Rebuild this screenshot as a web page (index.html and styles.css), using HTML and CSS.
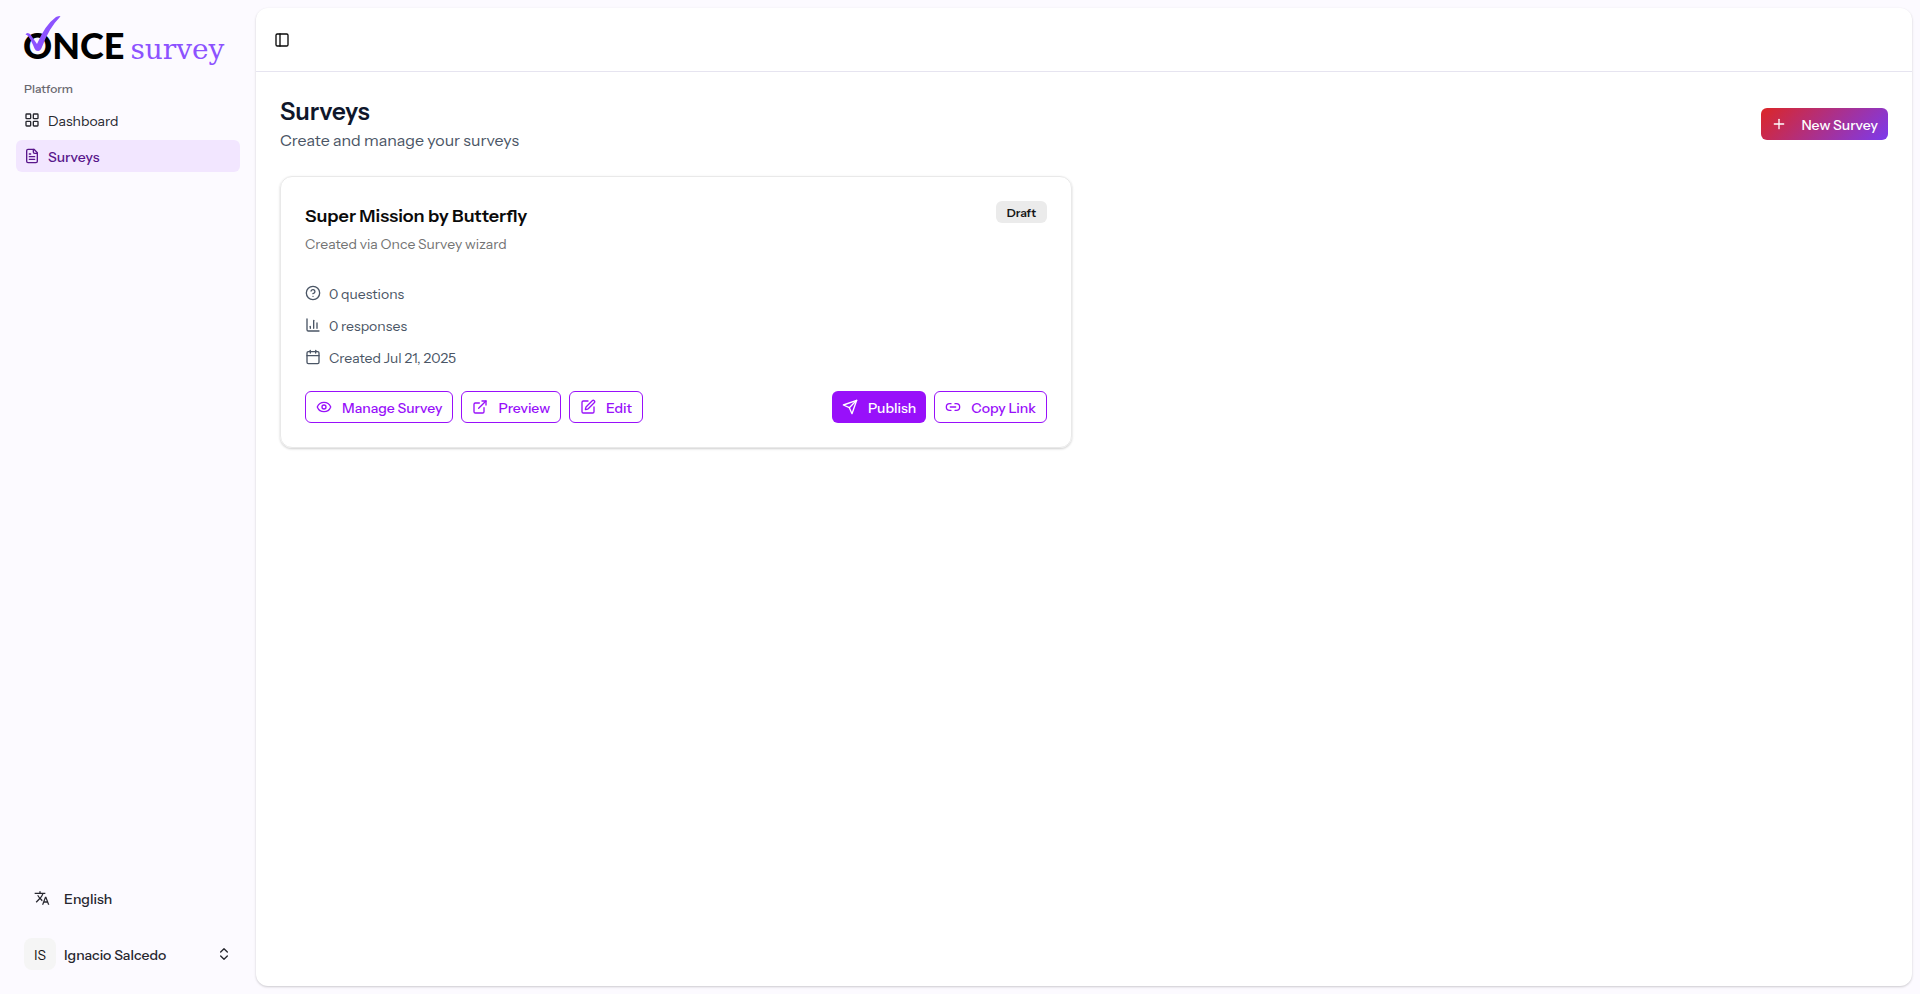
FILE: index.html
```html
<!DOCTYPE html>
<html lang="en">
<head>
    <meta charset="UTF-8">
    <meta name="viewport" content="width=device-width, initial-scale=1.0">
    <title>Surveys - Once Survey</title>
    <link rel="stylesheet" href="styles.css">
</head>
<body>
    <div class="layout">
        <aside class="sidebar">
            <a class="logo" href="#">
                <span class="logo-once">ONCE</span>
                <span class="logo-survey">survey</span>
                <svg class="logo-check" viewBox="0 0 36 36">
                    <path d="M.5 18.5 2 17Q5 17 6.500 20L12 28Q20 9 31 1 33 0 35.500 0L34.500 1.500Q24 12 17 31 15.500 35 13 35 10.500 35 9.500 32.500 6 24 3.500 20.500 2.500 19 .5 18.500Z"/>
                </svg>
            </a>

            <nav class="nav">
                <div class="nav-label">Platform</div>
                <a class="nav-item" href="#">
                    <svg class="icon" viewBox="0 0 24 24"><rect width="7" height="7" x="3" y="3" rx="1"/><rect width="7" height="7" x="14" y="3" rx="1"/><rect width="7" height="7" x="14" y="14" rx="1"/><rect width="7" height="7" x="3" y="14" rx="1"/></svg>
                    <span class="label">Dashboard</span>
                </a>
                <a class="nav-item active" href="#">
                    <svg class="icon" viewBox="0 0 24 24"><path d="M15 2H6a2 2 0 0 0-2 2v16a2 2 0 0 0 2 2h12a2 2 0 0 0 2-2V7Z"/><path d="M14 2v4a2 2 0 0 0 2 2h4"/><path d="M10 9H8"/><path d="M16 13H8"/><path d="M16 17H8"/></svg>
                    <span class="label">Surveys</span>
                </a>
            </nav>

            <div class="sidebar-footer">
                <button class="language" type="button">
                    <svg class="icon" viewBox="0 0 24 24"><path class="solid" d="m12.87 15.07-2.54-2.51.03-.03A17.52 17.52 0 0 0 14.07 6H17V4h-7V2H8v2H1v2h11.17C11.5 7.92 10.44 9.75 9 11.35 8.07 10.32 7.3 9.19 6.69 8h-2c.73 1.63 1.73 3.17 2.98 4.56l-5.09 5.02L4 19l5-5 3.11 3.11.76-2.04zM18.5 10h-2L12 22h2l1.12-3h4.75L21 22h2l-4.5-12zm-2.62 7 1.62-4.33L19.12 17h-3.24z"/></svg>
                    <span class="label">English</span>
                </button>
                <button class="user" type="button">
                    <span class="avatar">IS</span>
                    <span class="label user-name">Ignacio Salcedo</span>
                    <svg class="icon" viewBox="0 0 24 24"><path d="m7 15 5 5 5-5"/><path d="m7 9 5-5 5 5"/></svg>
                </button>
            </div>
        </aside>

        <main class="main">
            <header class="topbar">
                <button class="sidebar-toggle" type="button" aria-label="Toggle Sidebar">
                    <svg class="icon" viewBox="0 0 24 24"><rect width="18" height="18" x="3" y="3" rx="2"/><path d="M9 3v18"/></svg>
                </button>
            </header>

            <div class="content">
                <div class="page-header">
                    <div>
                        <h1>Surveys</h1>
                        <p>Create and manage your surveys</p>
                    </div>
                    <button class="button gradient" type="button">
                        <svg class="icon" viewBox="0 0 24 24"><path d="M5 12h14"/><path d="M12 5v14"/></svg>
                        <span class="label">New Survey</span>
                    </button>
                </div>

                <div class="survey-grid">
                    <article class="card">
                        <div class="card-header">
                            <div class="card-title">
                                <h2>Super Mission by Butterfly</h2>
                                <p>Created via Once Survey wizard</p>
                            </div>
                            <span class="badge">Draft</span>
                        </div>

                        <ul class="stats">
                            <li>
                                <svg class="icon" viewBox="0 0 24 24"><circle cx="12" cy="12" r="10"/><path d="M9.09 9a3 3 0 0 1 5.83 1c0 2-3 3-3 3"/><path d="M12 17h.01"/></svg>
                                <span class="label">0 questions</span>
                            </li>
                            <li>
                                <svg class="icon" viewBox="0 0 24 24"><path d="M3 3v16a2 2 0 0 0 2 2h16"/><path d="M18 17V9"/><path d="M13 17V5"/><path d="M8 17v-3"/></svg>
                                <span class="label">0 responses</span>
                            </li>
                            <li>
                                <svg class="icon" viewBox="0 0 24 24"><path d="M8 2v4"/><path d="M16 2v4"/><rect width="18" height="18" x="3" y="4" rx="2"/><path d="M3 10h18"/></svg>
                                <span class="label">Created Jul 21, 2025</span>
                            </li>
                        </ul>

                        <div class="actions">
                            <div class="action-group">
                                <button class="button outline" type="button">
                                    <svg class="icon" viewBox="0 0 24 24"><path d="M2.062 12.348a1 1 0 0 1 0-.696 10.75 10.75 0 0 1 19.876 0 1 1 0 0 1 0 .696 10.75 10.75 0 0 1-19.876 0"/><circle cx="12" cy="12" r="3"/></svg>
                                    <span class="label">Manage Survey</span>
                                </button>
                                <button class="button outline" type="button">
                                    <svg class="icon" viewBox="0 0 24 24"><path d="M15 3h6v6"/><path d="M10 14 21 3"/><path d="M18 13v6a2 2 0 0 1-2 2H5a2 2 0 0 1-2-2V8a2 2 0 0 1 2-2h6"/></svg>
                                    <span class="label">Preview</span>
                                </button>
                                <button class="button outline" type="button">
                                    <svg class="icon" viewBox="0 0 24 24"><path d="M12 3H5a2 2 0 0 0-2 2v14a2 2 0 0 0 2 2h14a2 2 0 0 0 2-2v-7"/><path d="M18.375 2.625a1 1 0 0 1 3 3l-9.013 9.014a2 2 0 0 1-.853.505l-2.873.84a.5.5 0 0 1-.62-.62l.84-2.873a2 2 0 0 1 .506-.852z"/></svg>
                                    <span class="label">Edit</span>
                                </button>
                            </div>
                            <div class="action-group">
                                <button class="button primary" type="button">
                                    <svg class="icon" viewBox="0 0 24 24"><path d="M22 2 15 22l-4-9-9-4Z"/><path d="M22 2 11 13"/></svg>
                                    <span class="label">Publish</span>
                                </button>
                                <button class="button outline" type="button">
                                    <svg class="icon" viewBox="0 0 24 24"><path d="M9 17H7A5 5 0 0 1 7 7h2"/><path d="M15 7h2a5 5 0 1 1 0 10h-2"/><path d="M8 12h8"/></svg>
                                    <span class="label">Copy Link</span>
                                </button>
                            </div>
                        </div>
                    </article>
                </div>
            </div>
        </main>
    </div>
</body>
</html>
```
FILE: styles.css
```css
* {
    margin: 0;
    padding: 0;
    box-sizing: border-box;
}

body {
    background: #fcfaff;
    color: #0a0a0a;
    font-family: 'Instrument Sans', Inter, 'Liberation Sans', sans-serif;
    font-size: 14px;
    line-height: 20px;
}

button {
    border: none;
    background: transparent;
    color: inherit;
    font: inherit;
    cursor: pointer;
}

a {
    color: inherit;
    text-decoration: none;
}

.icon {
    width: 16px;
    height: 16px;
    flex-shrink: 0;
    fill: none;
    stroke: currentColor;
    stroke-width: 2;
    stroke-linecap: round;
    stroke-linejoin: round;
}

.icon .solid {
    fill: currentColor;
    stroke: none;
}

/* Text beside an icon sits slightly below the icon's centre */
.label {
    padding-top: 2px;
    line-height: 18px;
}

.layout {
    display: flex;
    min-height: 100vh;
}

/* Sidebar */
.sidebar {
    width: 256px;
    flex-shrink: 0;
    display: flex;
    flex-direction: column;
    padding: 16px;
    color: #27272f;
}

.logo {
    position: relative;
    display: flex;
    align-items: baseline;
    gap: 6px;
    height: 56px;
    padding: 0 7px;
    line-height: 58px;
}

.logo-once {
    color: #000000;
    font-family: Lato, sans-serif;
    font-size: 36px;
    font-weight: 900;
}

.logo-survey {
    color: #8c52ff;
    font-family: 'DejaVu Serif', serif;
    font-size: 28px;
}

.logo-check {
    position: absolute;
    top: 0;
    left: 9px;
    width: 36px;
    height: 36px;
    fill: #8c52ff;
}

.nav {
    display: flex;
    flex-direction: column;
    gap: 4px;
}

.nav-label {
    padding: 7px 8px 1px;
    color: #68676e;
    font-size: 12px;
    font-weight: 500;
}

.nav-item {
    display: flex;
    align-items: center;
    gap: 8px;
    height: 32px;
    padding: 0 8px;
    border-radius: 6px;
}

.nav-item.active {
    background: #f2e6ff;
    color: #59168b;
    font-weight: 500;
}

.sidebar-footer {
    display: flex;
    flex-direction: column;
    gap: 16px;
    margin-top: auto;
}

.language {
    display: flex;
    align-items: center;
    gap: 14px;
    height: 32px;
    padding: 0 18px;
    font-weight: 500;
}

.user {
    display: flex;
    align-items: center;
    gap: 8px;
    height: 48px;
    padding: 0 8px;
    font-weight: 500;
}

.user-name {
    flex: 1;
    text-align: left;
}

.avatar {
    width: 32px;
    height: 32px;
    padding-top: 1px;
    border-radius: 8px;
    background: #f5f5f5;
    color: #171717;
    font-weight: 400;
    line-height: 32px;
}

/* Main panel */
.main {
    flex: 1;
    margin: 8px 8px 8px 0;
    border-radius: 12px;
    background: #ffffff;
    box-shadow: 0 1px 3px rgba(0, 0, 0, 0.1), 0 1px 2px rgba(0, 0, 0, 0.1);
}

.topbar {
    display: flex;
    align-items: center;
    height: 64px;
    padding: 0 12px;
    border-bottom: 1px solid #e6e4f0;
}

.sidebar-toggle {
    display: flex;
    align-items: center;
    justify-content: center;
    width: 28px;
    height: 28px;
}

.content {
    padding: 24px;
}

.page-header {
    display: flex;
    align-items: center;
    justify-content: space-between;
    margin-bottom: 24px;
}

.page-header h1 {
    color: #0f172b;
    font-size: 24px;
    font-weight: 600;
    line-height: 32px;
}

.page-header p {
    color: #4a5565;
    font-size: 16px;
    line-height: 24px;
}

.survey-grid {
    display: grid;
    grid-template-columns: repeat(2, 1fr);
    gap: 24px;
}

.card {
    padding: 24px;
    border: 1px solid #e9e9e9;
    border-radius: 12px;
    box-shadow: 0 1px 3px rgba(0, 0, 0, 0.1), 0 1px 2px rgba(0, 0, 0, 0.1);
}

.card-header {
    display: flex;
    align-items: flex-start;
    justify-content: space-between;
    margin-bottom: 29px;
}

.card-title {
    padding-top: 1px;
}

.card-header h2 {
    margin-bottom: 4px;
    font-size: 18px;
    font-weight: 600;
    line-height: 28px;
}

.card-header p {
    color: #737373;
}

.badge {
    padding: 2px 11px 0;
    border-radius: 6px;
    background: #ebebeb;
    color: #171717;
    font-size: 12px;
    font-weight: 600;
}

.stats {
    display: flex;
    flex-direction: column;
    gap: 12px;
    margin-bottom: 24px;
    list-style: none;
}

.stats li {
    display: flex;
    align-items: center;
    gap: 8px;
    color: #4a5565;
}

.actions {
    display: flex;
    justify-content: space-between;
}

.action-group {
    display: flex;
    gap: 8px;
}

.button {
    display: flex;
    align-items: center;
    gap: 10px;
    height: 32px;
    padding: 0 10px;
    border-radius: 6px;
    font-weight: 500;
    white-space: nowrap;
}

.button.outline {
    border: 1px solid #9810fa;
    color: #9810fa;
}

.button.primary {
    background: #9810fa;
    color: #ffffff;
}

.button.gradient {
    gap: 14px;
    background: linear-gradient(135deg, #dc2626, #7c3aed);
    color: #ffffff;
}
```
